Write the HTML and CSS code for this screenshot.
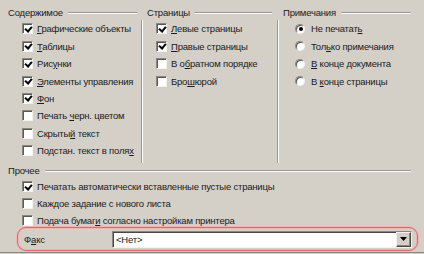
FILE: index.html
```html
<!DOCTYPE html>
<html lang="ru">

<head>
    <meta charset="UTF-8">
    <title>Печать</title>
    <link rel="stylesheet" href="styles.css">
</head>

<body>
    <div class="dialog">
        <div class="top">
            <div class="col col1">
                <div class="legend"><span>Содержимое</span><i class="rule"></i></div>
                <ul class="items">
                    <li><span class="check on"></span><span><u>Г</u>рафические объекты</span></li>
                    <li><span class="check on"></span><span><u>Т</u>аблицы</span></li>
                    <li><span class="check on"></span><span>Рис<u>у</u>нки</span></li>
                    <li><span class="check on"></span><span><u>Э</u>лементы управления</span></li>
                    <li><span class="check on"></span><span><u>Ф</u>он</span></li>
                    <li><span class="check"></span><span>Печать <u>ч</u>ерн. цветом</span></li>
                    <li><span class="check"></span><span>Скрыты<u>й</u> текст</span></li>
                    <li><span class="check"></span><span>Подстан. текст в поля<u>х</u></span></li>
                </ul>
            </div>
            <div class="col col2">
                <div class="legend"><span>Страницы</span><i class="rule"></i></div>
                <ul class="items sep">
                    <li><span class="check on"></span><span><u>Л</u>евые страницы</span></li>
                    <li><span class="check on"></span><span><u>П</u>равые страницы</span></li>
                    <li><span class="check"></span><span>В о<u>б</u>ратном порядке</span></li>
                    <li><span class="check"></span><span>Бро<u>ш</u>юрой</span></li>
                </ul>
            </div>
            <div class="col col3">
                <div class="legend"><span>Примечания</span><i class="rule"></i></div>
                <ul class="items sep">
                    <li><span class="radio on"></span><span>Не печатат<u>ь</u></span></li>
                    <li><span class="radio"></span><span>Тол<u>ь</u>ко примечания</span></li>
                    <li><span class="radio"></span><span><u>В</u> конце документа</span></li>
                    <li><span class="radio"></span><span>В <u>к</u>онце страницы</span></li>
                </ul>
            </div>
        </div>

        <div class="other">
            <div class="legend"><span>Прочее</span><i class="rule"></i></div>
            <ul class="items">
                <li><span class="check on"></span><span>Печатать автоматически вставленные пустые страницы</span></li>
                <li><span class="check"></span><span>Каж<u>д</u>ое задание с нового листа</span></li>
                <li><span class="check"></span><span>Подача бумаг<u>и</u> согласно настройкам принтера</span></li>
            </ul>
            <div class="fax">
                <span class="fax_label">Ф<u>а</u>кс</span>
                <div class="select">
                    <span class="select_text">&lt;Нет&gt;</span>
                    <span class="select_btn">
                        <svg width="7" height="4" viewBox="0 0 7 4"><path d="M0 0h7L3.5 4z" fill="#000"/></svg>
                    </span>
                </div>
            </div>
        </div>
    </div>
</body>

</html>
```

FILE: styles.css
```css
* {
    margin: 0;
    padding: 0;
    box-sizing: border-box;
}

li {
    list-style: none;
}

body {
    width: 424px;
    height: 254px;
    overflow: hidden;
    background-color: #d4d0c8;
    font-family: "Liberation Sans", Arial, sans-serif;
    font-size: 9.5px;
    letter-spacing: -0.2px;
    color: #1a1a1a;
}

.dialog {
    height: 253px;
    border-bottom: 1px solid #8a8780;
}

.top {
    display: flex;
    height: 163px;
    padding-top: 5px;
}

.col {
    display: flex;
    flex-direction: column;
}

.col1 {
    width: 141px;
}

.col2 {
    width: 136px;
}

.col3 {
    flex: 1;
}

.legend {
    display: flex;
    align-items: center;
    height: 15px;
    white-space: nowrap;
}

.col1 .legend {
    padding: 0 4px 0 8px;
}

.col2 .legend {
    padding: 0 5px 0 6px;
}

.col3 .legend {
    padding: 0 13px 0 6px;
}

.rule {
    flex: 1;
    height: 2px;
    margin-left: 5px;
    border-top: 1px solid #9a968e;
    border-bottom: 1px solid #fff;
}

.items {
    flex: 1;
}

.items li {
    display: flex;
    align-items: center;
    height: 17.45px;
    white-space: nowrap;
    overflow: hidden;
}

.col1 .items li {
    padding-left: 22px;
    padding-right: 4px;
}

.col2 .items li {
    padding-left: 14px;
}

.col3 .items li {
    padding-left: 17px;
}

.sep {
    border-left: 1px solid #9a968e;
    box-shadow: inset 1px 0 0 #fff;
}

.check {
    flex: none;
    position: relative;
    width: 11px;
    height: 11px;
    margin-right: 4px;
    background-color: #fff;
    border-top: 1px solid #8a8780;
    border-left: 1px solid #8a8780;
    border-right: 1px solid #f4f2ee;
    border-bottom: 1px solid #f4f2ee;
    box-shadow: inset 1px 1px 0 #5a5850;
}

.check.on::after {
    content: "";
    position: absolute;
    left: 2.5px;
    top: 0.5px;
    width: 3px;
    height: 5px;
    border-right: 2px solid #000;
    border-bottom: 2px solid #000;
    transform: rotate(40deg);
}

.radio {
    flex: none;
    position: relative;
    width: 10px;
    height: 10px;
    margin-right: 6px;
    border-radius: 50%;
    background-color: #fff;
    border: 1px solid;
    border-color: #8a8780 #f4f2ee #f4f2ee #8a8780;
    box-shadow: inset 1px 1px 0 #5a5850;
}

.radio.on::after {
    content: "";
    position: absolute;
    left: 2.5px;
    top: 2.5px;
    width: 4px;
    height: 4px;
    border-radius: 50%;
    background-color: #000;
}

.other .legend {
    padding: 0 13px 0 8px;
}

.other .items li {
    height: 17px;
    padding-left: 22px;
}

.fax {
    display: flex;
    align-items: center;
    height: 24px;
    margin: -2px 6px 0 17px;
    padding: 0 5px 0 6px;
    border: 1px solid #d86a6a;
    border-radius: 9px;
    box-shadow: 0 0 0 1px #eeb6b4, inset 0 0 0 1px #eeb6b4;
}

.fax_label {
    width: 88px;
}

.select {
    flex: 1;
    display: flex;
    align-items: center;
    justify-content: space-between;
    height: 17px;
    background-color: #fff;
    border-top: 1px solid #8a8780;
    border-left: 1px solid #8a8780;
    border-right: 1px solid #f4f2ee;
    border-bottom: 1px solid #f4f2ee;
    box-shadow: inset 1px 1px 0 #4a4840;
}

.select_text {
    padding-left: 3px;
}

.select_btn {
    display: flex;
    align-items: center;
    justify-content: center;
    width: 15px;
    height: 15px;
    background-color: #d4d0c8;
    border: 1px solid;
    border-color: #f4f2ee #4a4840 #4a4840 #f4f2ee;
    box-shadow: inset -1px -1px 0 #8a8780;
}
```
